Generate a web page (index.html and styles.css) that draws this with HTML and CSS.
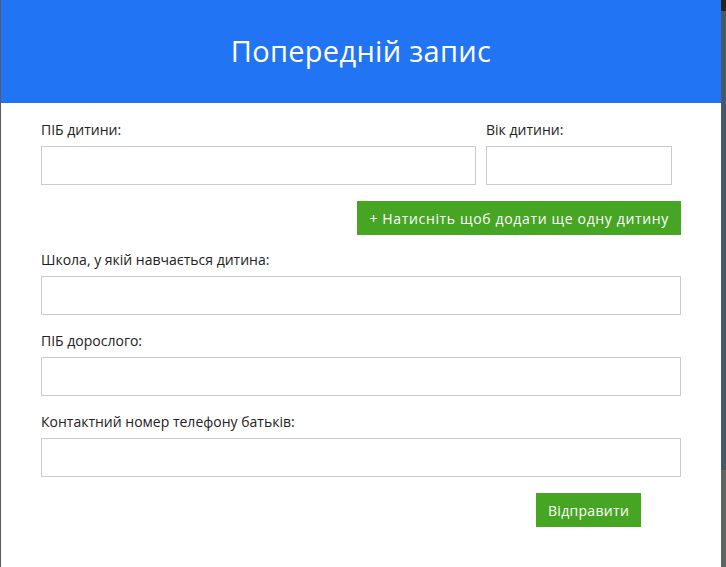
FILE: index.html
```html
<!DOCTYPE html>
<html lang="uk">
<head>
  <meta charset="UTF-8" />
  <meta name="viewport" content="width=device-width, initial-scale=1.0"/>
  <title>Попередній запис</title>
  <link rel="stylesheet" href="styles.css">
</head>
<body>
  <div class="modal">
    <div class="modal-header">
      <h1>Попередній запис</h1>
    </div>
    <form class="modal-body" onsubmit="return false;">
      <div class="child-row">
        <div class="field">
          <label for="child-name">ПІБ дитини:</label>
          <input id="child-name" type="text" />
        </div>
        <div class="field">
          <label for="child-age">Вік дитини:</label>
          <input id="child-age" type="text" />
        </div>
      </div>
      <div class="add-row">
        <button type="button" class="btn btn-add">+ Натисніть щоб додати ще одну дитину</button>
      </div>

      <div class="field group">
        <label for="school">Школа, у якій навчається дитина:</label>
        <input id="school" type="text" />
      </div>
      <div class="field group">
        <label for="adult-name">ПІБ дорослого:</label>
        <input id="adult-name" type="text" />
      </div>
      <div class="field group">
        <label for="phone">Контактний номер телефону батьків:</label>
        <input id="phone" type="text" />
      </div>

      <div class="submit-row">
        <button type="submit" class="btn">Відправити</button>
      </div>
    </form>
  </div>
</body>
</html>
```

FILE: styles.css
```css
html, body { margin: 0; height: 100%; }
body { background: linear-gradient(#222 0 11px, #46596a 11px 470px, #5e6562 470px); font-family: "Open Sans", sans-serif; color: #222; overflow: hidden; }
.modal { width: 720px; min-height: 567px; background: #fff; border-left: 1px solid #5c5c5c; }
.modal-header { height: 103px; background: #2174f3; display: flex; align-items: center; justify-content: center; }
.modal-header h1 { margin: 0 0 2px; color: #fff; font-size: 29px; font-weight: 400; letter-spacing: 0.3px; }
.modal-body { padding: 17px 40px 0 40px; }
.field { display: flex; flex-direction: column; }
.field label { font-size: 14px; line-height: 20px; margin-bottom: 6px; }
.field input { height: 39px; box-sizing: border-box; border: 1px solid #ccc; padding: 6px 10px; font-size: 14px; font-family: inherit; }
.child-row { display: grid; grid-template-columns: 435px 186px; gap: 10px; }
.add-row { display: flex; justify-content: flex-end; margin: 16px 0 15px; }
.btn { background: #46a522; color: #fff; border: none; height: 34px; padding: 0 12px; font-size: 14px; letter-spacing: 0.3px; font-family: inherit; cursor: pointer; }
.btn-add { letter-spacing: 0.65px; }
.btn:hover { background: #3c8f1d; }
.group { margin-bottom: 16px; }
.submit-row { padding-left: 495px; margin-top: 2px; }
```
